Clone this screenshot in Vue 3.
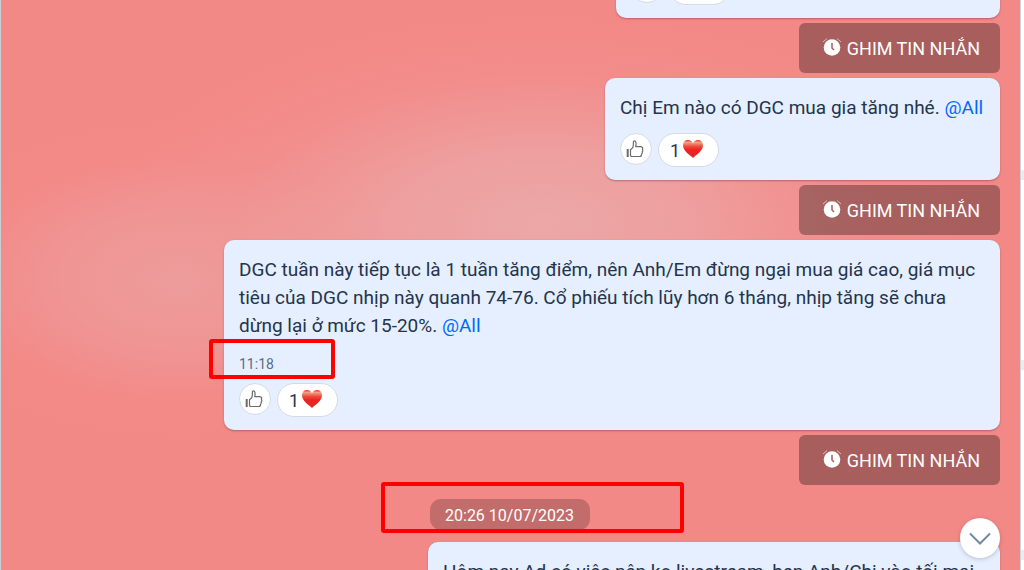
<script setup>
const messages = [
  { id: 1, kind: 'peek', lines: [], reactions: true, pin: true },
  { id: 2, kind: 'short', lines: ['Chị Em nào có DGC mua gia tăng nhé.'], mention: true, reactions: true, pin: true },
  {
    id: 3,
    kind: 'wide',
    lines: [
      'DGC tuần này tiếp tục là 1 tuần tăng điểm, nên Anh/Em đừng ngại mua giá cao, giá mục',
      'tiêu của DGC nhịp này quanh 74-76. Cổ phiếu tích lũy hơn 6 tháng, nhịp tăng sẽ chưa',
      'dừng lại ở mức 15-20%.',
    ],
    mention: true,
    time: '11:18',
    reactions: true,
    pin: true,
  },
  {
    id: 4,
    kind: 'medium',
    date: '20:26 10/07/2023',
    lines: ['Hôm nay Ad có việc nên ko livestream, hẹn Anh/Chị vào tối mai'],
  },
]
</script>

<template>
  <div class="window">
    <main class="chat">
      <template v-for="m in messages" :key="m.id">
        <div v-if="m.date" class="date-row">
          <time class="date">{{ m.date }}</time>
          <span class="mark mark-date"></span>
        </div>
        <article class="card" :class="m.kind">
          <p class="text">
            <span v-for="(line, i) in m.lines" :key="i" class="line">{{ line }}<template v-if="m.mention && i === m.lines.length - 1">&nbsp;<a href="#">@All</a></template></span>
          </p>
          <div v-if="m.time" class="time-row">
            <time>{{ m.time }}</time>
            <span class="mark mark-time"></span>
          </div>
          <div v-if="m.reactions" class="reactions">
            <button class="like" aria-label="Thích">
              <svg width="18" height="18" viewBox="0 0 18 18" fill="none" stroke="#6b6b6b" stroke-width="1.2" stroke-linejoin="round">
                <path d="M4.500 15.200V9.800L6.800 7.600L7.400 4.800V2.200C7.400 .4 9.400 .4 9.900 2.400C10.200 4 10 5.400 9.700 6.700H14.600C16.400 6.700 17 8 16.400 9.200C17 10.200 16.800 11.300 16.200 11.900C16.500 13 16 13.800 15.600 14.200C15.600 15.600 15 16.500 13.600 16.500H6.200C5.200 16.500 4.500 16 4.500 15.200Z" />
                <path d="M1.700 9V17" stroke-width="2" />
              </svg>
            </button>
            <button class="chip" aria-label="1 yêu thích">
              <span>1</span>
              <svg width="22" height="20" viewBox="0 0 22 20">
                <defs>
                  <linearGradient :id="'heart' + m.id" x1="0" y1="0" x2="0" y2="1">
                    <stop offset="0" stop-color="#e8362f" />
                    <stop offset=".14" stop-color="#f0a27e" />
                    <stop offset=".36" stop-color="#ef4a3f" />
                    <stop offset=".55" stop-color="#ee2222" />
                    <stop offset="1" stop-color="#dc2a22" />
                  </linearGradient>
                </defs>
                <path :fill="'url(#heart' + m.id + ')'" d="M11 19C8 16 1 12 1 6.500C1 3 3.200 1 6 1C8.500 1 10.200 2.300 11 4.200C11.800 2.300 13.500 1 16 1C18.800 1 21 3 21 6.500C21 12 14 16 11 19Z" />
              </svg>
            </button>
          </div>
        </article>
        <button v-if="m.pin" class="pin">
          <svg width="20" height="20" viewBox="0 0 20 20" fill="none">
            <circle cx="10" cy="10.500" r="8.300" fill="#fff" />
            <path d="M1 5L5 1.500M19 5L15 1.500" stroke="#e0bcbc" stroke-width="1" />
            <path d="M10 6V11L12 13" stroke="#a75e5e" stroke-width="1.500" />
          </svg>
          <span>GHIM TIN NHẮN</span>
        </button>
      </template>
      <button class="down" aria-label="Cuộn xuống">
        <svg width="22" height="14" viewBox="0 0 22 14" fill="none" stroke="#7589a3" stroke-width="2">
          <path d="M1 1.500L11 11.500L21 1.500" />
        </svg>
      </button>
    </main>
    <aside class="side"><i></i><i></i><i></i></aside>
  </div>
</template>

<style>
body {
  margin: 0;
}
</style>

<style scoped>
* {
  box-sizing: border-box;
}
.window {
  display: flex;
  height: 100vh;
  overflow: hidden;
  font-family: Roboto, "Noto Sans", sans-serif;
  color: #24344c;
}
.chat {
  position: relative;
  flex: 1;
  display: flex;
  flex-direction: column;
  align-items: flex-end;
  padding-right: 20px;
  overflow: hidden;
  border-left: 1px solid #c9cdd4;
  background:
    radial-gradient(ellipse 42% 36% at 53% 39%, rgba(235, 171, 171, 0.9), rgba(236, 166, 166, 0.75) 35%, rgba(240, 150, 148, 0.3) 72%, rgba(243, 137, 135, 0)),
    radial-gradient(ellipse 28% 28% at 18% 49%, rgba(236, 160, 160, 0.85), rgba(237, 156, 155, 0.65) 42%, rgba(241, 145, 143, 0.2) 75%, rgba(243, 137, 135, 0)),
    #f38987;
}
.card {
  flex: none;
  padding: 16px 15px 13px;
  border-radius: 10px;
  background: #e5efff;
  box-shadow: 0 1px 2px rgba(90, 40, 50, 0.4);
}
.peek {
  width: 384px;
  margin-top: -84px;
}
.short {
  min-width: 395px;
}
.wide {
  width: 776px;
}
.medium {
  width: 572px;
}
.text {
  margin: 0;
  min-height: 28px;
  font-size: 19px;
  line-height: 28px;
}
.line {
  display: block;
  white-space: nowrap;
}
.text a {
  color: #0068ff;
  text-decoration: none;
}
.time-row {
  position: relative;
  margin-top: 14px;
  font-size: 14px;
  line-height: 20px;
  color: #5a6b87;
}
.reactions {
  display: flex;
  align-items: flex-start;
  gap: 6px;
  margin-top: 11px;
}
.wide .reactions {
  margin-top: 9px;
}
button {
  font: inherit;
  color: inherit;
  cursor: pointer;
}
.like,
.chip {
  display: flex;
  align-items: center;
  border: 1px solid #d6dbe3;
  background: #fff;
}
.like {
  justify-content: center;
  width: 32px;
  height: 32px;
  padding: 0 2px 0 0;
  border-radius: 50%;
}
.chip {
  gap: 2px;
  width: 61px;
  height: 34px;
  padding: 0 0 0 11px;
  border-radius: 17px;
  font-size: 18px;
}
.chip svg {
  margin-bottom: 2px;
}
.pin {
  flex: none;
  display: flex;
  align-items: center;
  gap: 5px;
  height: 50px;
  margin: 5px 0;
  padding: 0 20px 0 23px;
  border: 0;
  border-radius: 6px;
  background: rgba(0, 0, 0, 0.31);
  color: #fff;
  font-size: 18px;
}
.pin svg {
  margin-bottom: 2px;
}
.date-row {
  position: relative;
  align-self: center;
  flex: none;
  margin: 9px -18px 12px 0;
}
.date {
  display: block;
  width: 160px;
  padding-top: 2px;
  border-radius: 11px;
  background: rgba(0, 0, 0, 0.2);
  color: #fff;
  font-size: 16px;
  line-height: 29px;
  text-align: center;
}
.mark {
  position: absolute;
  border: 4px solid #f00;
  border-radius: 3px;
}
.mark-time {
  left: -30px;
  top: -15px;
  width: 126px;
  height: 40px;
}
.mark-date {
  left: -49px;
  top: -17px;
  width: 303px;
  height: 51px;
}
.down {
  position: absolute;
  right: 20px;
  bottom: 12px;
  display: flex;
  align-items: center;
  justify-content: center;
  width: 40px;
  height: 40px;
  padding: 2px 0 0;
  border: 0;
  border-radius: 50%;
  background: #fff;
  box-shadow: 0 1px 4px rgba(60, 40, 60, 0.25);
}
.side {
  display: flex;
  flex-direction: column;
  gap: 180px;
  width: 4px;
  padding-top: 170px;
  border-left: 1px solid #cfd3da;
  background: #fff;
}
.side i {
  flex: none;
  height: 10px;
  background: #ebecf0;
}
</style>
